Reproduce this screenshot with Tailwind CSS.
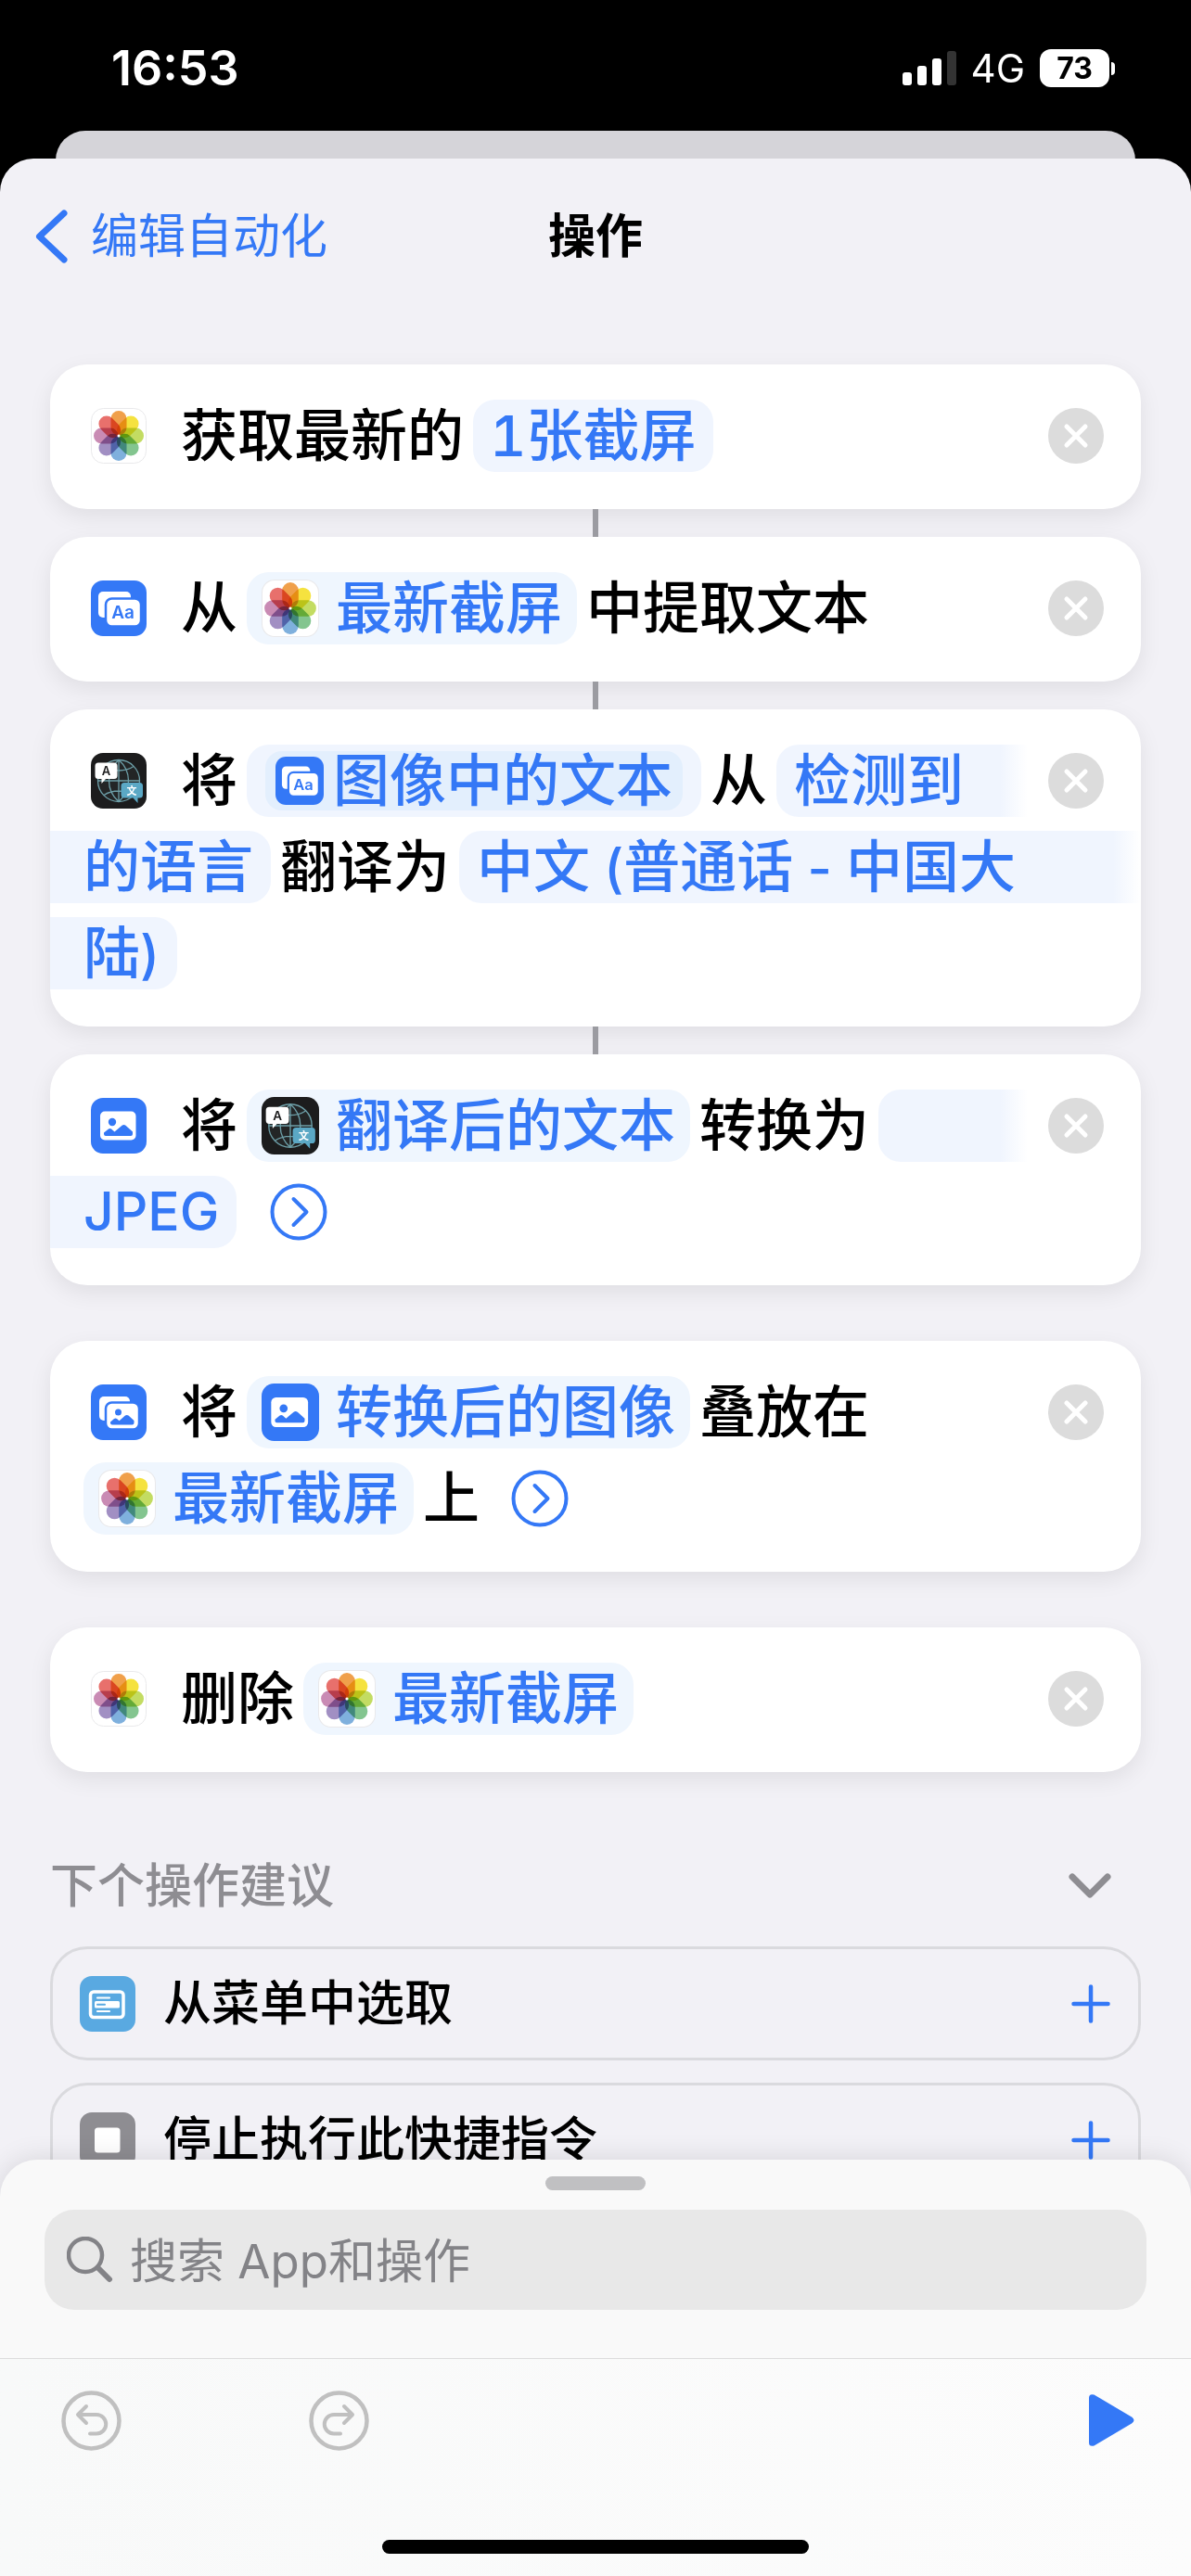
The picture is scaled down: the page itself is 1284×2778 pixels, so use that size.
<!DOCTYPE html>
<html lang="zh-CN">

<head>
    <meta charset="UTF-8">
    <meta name="viewport" content="width=device-width, initial-scale=1.0">
    <title>操作</title>
    <script src="https://cdn.jsdelivr.net/npm/@tailwindcss/browser@4"></script>
</head>

<body class="h-screen flex flex-col overflow-hidden bg-black font-['Inter','Noto_Sans_CJK_SC',sans-serif] text-black">

    <!-- icon sprite -->
    <svg class="hidden">
        <symbol id="photos" viewBox="0 0 60 60">
            <rect x="0.5" y="0.5" width="59" height="59" rx="13" fill="#fff" stroke="#e9e9eb" />
            <g class="isolate">
                <rect class="mix-blend-multiply" x="21.5" y="3" width="17" height="26.5" rx="8.5" fill="#f0a04b" />
                <rect class="mix-blend-multiply" x="21.5" y="3" width="17" height="26.5" rx="8.5" fill="#f5e23f" transform="rotate(45 30 30)" />
                <rect class="mix-blend-multiply" x="21.5" y="3" width="17" height="26.5" rx="8.5" fill="#c3dc62" transform="rotate(90 30 30)" />
                <rect class="mix-blend-multiply" x="21.5" y="3" width="17" height="26.5" rx="8.5" fill="#83c58f" transform="rotate(135 30 30)" />
                <rect class="mix-blend-multiply" x="21.5" y="3" width="17" height="26.5" rx="8.5" fill="#7fb0dd" transform="rotate(180 30 30)" />
                <rect class="mix-blend-multiply" x="21.5" y="3" width="17" height="26.5" rx="8.5" fill="#a18fc3" transform="rotate(225 30 30)" />
                <rect class="mix-blend-multiply" x="21.5" y="3" width="17" height="26.5" rx="8.5" fill="#c98bb4" transform="rotate(270 30 30)" />
                <rect class="mix-blend-multiply" x="21.5" y="3" width="17" height="26.5" rx="8.5" fill="#e8706c" transform="rotate(315 30 30)" />
            </g>
            <circle cx="30" cy="30" r="1.5" fill="#fff" />
        </symbol>
        <symbol id="extract" viewBox="0 0 60 60">
            <rect width="60" height="60" rx="13" fill="#3478f6" />
            <rect x="8" y="12" width="35" height="28" rx="5" fill="#fff" />
            <rect x="16" y="19.5" width="38" height="30" rx="6.5" fill="#fff" stroke="#3478f6" stroke-width="2.5" />
            <text x="34.5" y="41" text-anchor="middle" font-size="19" font-weight="600" fill="#3478f6" font-family="Inter">Aa</text>
        </symbol>
        <symbol id="translate" viewBox="0 0 60 60">
            <rect width="60" height="60" rx="13" fill="#1c1c1d" />
            <g fill="none" stroke="#6d9fa8" stroke-width="1.3">
                <circle cx="30" cy="30" r="22.5" fill="#232526" />
                <path d="M30 7.5v45M7.5 30h45M30 7.5c-14 12-14 33 0 45M30 7.5c14 12 14 33 0 45M14 14.5c9 6 23 6 32 0M14 45.5c9-6 23-6 32 0" />
            </g>
            <path d="M8 10.5h17a3.5 3.5 0 0 1 3.5 3.5v10.5a3.5 3.5 0 0 1-3.5 3.5h-9l-4.5 5v-5H8a3.5 3.5 0 0 1-3.5-3.5V14a3.5 3.5 0 0 1 3.5-3.5z" fill="#fff" />
            <text x="16.5" y="24" text-anchor="middle" font-size="13" font-weight="600" fill="#1c1c1d" font-family="Inter">A</text>
            <path d="M36 32h16.5a3.5 3.5 0 0 1 3.5 3.5V45a3.5 3.5 0 0 1-3.5 3.5h-2V54l-5-5.5H36a3.5 3.5 0 0 1-3.5-3.5v-9.5A3.5 3.5 0 0 1 36 32z" fill="#5ba8c5" />
            <text x="44" y="44.5" text-anchor="middle" font-size="11" font-weight="700" fill="#fff" font-family="Noto Sans CJK SC">文</text>
        </symbol>
        <symbol id="image" viewBox="0 0 60 60">
            <rect width="60" height="60" rx="13" fill="#3478f6" />
            <rect x="10" y="14.5" width="38.5" height="31" rx="5" fill="#fff" />
            <circle cx="23" cy="26" r="4.2" fill="#3478f6" />
            <path d="M14 39v-1.5l5-4q1.5-1 3 0l3.5 3 8-6.8q2-1.4 4 0l7.5 6.8V39q0 2-2 2H16q-2 0-2-2z" fill="#3478f6" />
        </symbol>
        <symbol id="overlay" viewBox="0 0 60 60">
            <rect width="60" height="60" rx="13" fill="#3478f6" />
            <rect x="9" y="13" width="33" height="26" rx="5" fill="#fff" />
            <rect x="16" y="19.5" width="36" height="29" rx="6.5" fill="#fff" stroke="#3478f6" stroke-width="2.5" />
            <circle cx="29.5" cy="30" r="3.5" fill="#3478f6" />
            <path d="M21 41.5V40.5l4-3.5q1.5-1 3 0l2.5 2.2 6.5-5.6q1.8-1.2 3.5 0l6 5.4v2.5q0 2-2 2H23q-2 0-2-2z" fill="#3478f6" />
        </symbol>
        <symbol id="menu" viewBox="0 0 60 60">
            <rect width="60" height="60" rx="13" fill="#59a9e1" />
            <rect x="11.5" y="17" width="35.5" height="27.5" rx="3.5" fill="none" stroke="#fff" stroke-width="3.5" />
            <path d="M19 23.5h13M19 38h13" stroke="#fff" stroke-width="2.2" stroke-linecap="round" />
            <rect x="16" y="27" width="27" height="7.5" rx="1.5" fill="#fff" />
            <path d="M19 30.8h8" stroke="#59a9e1" stroke-width="2" stroke-linecap="round" />
        </symbol>
        <symbol id="stop" viewBox="0 0 60 60">
            <rect width="60" height="60" rx="13" fill="#8e8d92" />
            <rect x="16" y="16.5" width="27.5" height="27" rx="3.5" fill="#fff" />
        </symbol>
        <symbol id="close" viewBox="0 0 60 60">
            <circle cx="30" cy="30" r="30" fill="#dcdcdc" />
            <path d="M20 20l20 20M40 20L20 40" stroke="#fff" stroke-width="5" stroke-linecap="round" />
        </symbol>
        <symbol id="more" viewBox="0 0 62 62">
            <circle cx="31" cy="31" r="28.5" fill="none" stroke="#3478f6" stroke-width="4" />
            <path d="M25.5 17l14 14-14 14" fill="none" stroke="#3478f6" stroke-width="4" stroke-linecap="round" stroke-linejoin="round" />
        </symbol>
        <symbol id="plus" viewBox="0 0 42 42">
            <path d="M21 2.5v37M2.5 21h37" stroke="#3478f6" stroke-width="4.5" stroke-linecap="round" />
        </symbol>
    </svg>

    <!-- status bar -->
    <header class="h-[141px] shrink-0 flex items-center justify-between pl-[120px] pr-[82px] pt-1.5 text-white">
        <time class="text-[52px] font-semibold">16:53</time>
        <div class="flex items-center gap-4">
            <svg class="w-[58px] h-[37px]" viewBox="0 0 58 37" fill="#fff">
                <rect x="0" y="23" width="10" height="14" rx="3" />
                <rect x="16" y="16" width="10" height="21" rx="3" />
                <rect x="32" y="8" width="10" height="29" rx="3" />
                <rect x="48" y="0" width="10" height="37" rx="3" fill="#333" />
            </svg>
            <span class="text-[42px]">4G</span>
            <div class="flex items-center gap-0.5">
                <span class="w-[75px] h-[41px] rounded-xl bg-white flex items-center justify-center text-black text-[32px] font-bold">73</span>
                <span class="w-1 h-[14px] rounded-r-full bg-white"></span>
            </div>
        </div>
    </header>

    <div class="h-[70px] -mb-10 shrink-0 mx-[60px] rounded-t-[32px] bg-[#d5d4d9]"></div>

    <div class="relative flex-1 min-h-0 flex flex-col rounded-t-[36px] bg-[#f2f1f6] overflow-hidden">
        <nav class="h-[168px] shrink-0 grid grid-cols-3 items-center px-[38px] text-[51px]">
            <a href="#" class="flex items-center gap-6 text-[#3478f6] whitespace-nowrap">
                <svg class="w-9 h-[58px]" viewBox="0 0 36 58" fill="none" stroke="currentColor" stroke-width="7" stroke-linecap="round" stroke-linejoin="round">
                    <path d="M31 4L4.5 29 31 54" />
                </svg>
                编辑自动化
            </a>
            <h1 class="text-center font-bold">操作</h1>
        </nav>

        <main class="flex-1 min-h-0 overflow-y-auto [scrollbar-width:none] px-[54px] pt-[54px] font-medium">
            <div class="flex flex-col text-[61px] leading-[78px] whitespace-nowrap">

                <section class="rounded-[40px] bg-white pt-[30px] pb-[33px] shadow-[0_8px_24px_rgba(0,0,0,0.08)]">
                    <div class="h-[93px] pl-11 pr-10 flex items-center gap-2.5">
                        <svg class="size-[60px] mr-[27px]"><use href="#photos" /></svg>
                        <span>获取最新的</span>
                        <button class="h-[78px] px-[18px] rounded-3xl bg-[#f0f5fe] text-[#3478f6] tabular-nums">1张截屏</button>
                        <button class="ml-auto" aria-label="移除"><svg class="size-[60px]"><use href="#close" /></svg></button>
                    </div>
                </section>
                <div class="relative mx-auto w-1.5 h-[30px] bg-[#9b9ba1]"></div>

                <section class="rounded-[40px] bg-white pt-[30px] pb-[33px] shadow-[0_8px_24px_rgba(0,0,0,0.08)]">
                    <div class="h-[93px] pl-11 pr-10 flex items-center gap-2.5">
                        <svg class="size-[60px] mr-[27px]"><use href="#extract" /></svg>
                        <span>从</span>
                        <button class="h-[78px] px-4 rounded-3xl bg-[#eff6fe] text-[#3478f6] flex items-center gap-[18px]">
                            <svg class="size-[62px]"><use href="#photos" /></svg>最新截屏
                        </button>
                        <span>中提取文本</span>
                        <button class="ml-auto" aria-label="移除"><svg class="size-[60px]"><use href="#close" /></svg></button>
                    </div>
                </section>
                <div class="relative mx-auto w-1.5 h-[30px] bg-[#9b9ba1]"></div>

                <section class="rounded-[40px] bg-white pt-[30px] pb-[33px] shadow-[0_8px_24px_rgba(0,0,0,0.08)]">
                    <div class="h-[93px] pl-11 pr-10 flex items-center gap-2.5">
                        <svg class="size-[60px] mr-[27px]"><use href="#translate" /></svg>
                        <span>将</span>
                        <button class="h-[78px] px-5 rounded-3xl bg-[#f0f5fe] text-[#3478f6] flex items-center">
                            <span class="h-16 px-[11px] rounded-[18px] bg-[#e3effd] flex items-center gap-2.5">
                                <svg class="size-[52px]"><use href="#extract" /></svg>图像中的文本
                            </span>
                        </button>
                        <span>从</span>
                        <button class="flex-1 h-[78px] pl-[19px] mr-3 rounded-l-3xl bg-[linear-gradient(to_right,#f0f5fe_calc(100%-30px),#fff)] text-[#3478f6] text-left">检测到</button>
                        <button class="ml-auto" aria-label="移除"><svg class="size-[60px]"><use href="#close" /></svg></button>
                    </div>
                    <div class="h-[93px] flex items-center gap-2.5">
                        <button class="h-[78px] pl-9 pr-[19px] rounded-r-3xl bg-[#f0f5fe] text-[#3478f6]">的语言</button>
                        <span>翻译为</span>
                        <button class="flex-1 h-[78px] pl-[19px] rounded-l-3xl bg-[linear-gradient(to_right,#f0f5fe_calc(100%-30px),#fff)] text-[#3478f6] text-left">中文<span class="text-[57px]"> (</span>普通话<span class="text-[57px]"> - </span>中国大</button>
                    </div>
                    <div class="h-[93px] flex items-center">
                        <button class="h-[78px] pl-9 pr-[19px] rounded-r-3xl bg-[#f0f5fe] text-[#3478f6]">陆<span class="text-[57px]">)</span></button>
                    </div>
                </section>
                <div class="relative mx-auto w-1.5 h-[30px] bg-[#9b9ba1]"></div>

                <section class="rounded-[40px] bg-white pt-[30px] pb-[33px] shadow-[0_8px_24px_rgba(0,0,0,0.08)]">
                    <div class="h-[93px] pl-11 pr-10 flex items-center gap-2.5">
                        <svg class="size-[60px] mr-[27px]"><use href="#image" /></svg>
                        <span>将</span>
                        <button class="h-[78px] px-4 rounded-3xl bg-[#eff6fe] text-[#3478f6] flex items-center gap-[18px]">
                            <svg class="size-[62px]"><use href="#translate" /></svg>翻译后的文本
                        </button>
                        <span>转换为</span>
                        <span class="flex-1 h-[78px] mr-3 rounded-l-3xl bg-[linear-gradient(to_right,#f0f5fe_calc(100%-30px),#fff)]"></span>
                        <button class="ml-auto" aria-label="移除"><svg class="size-[60px]"><use href="#close" /></svg></button>
                    </div>
                    <div class="h-[93px] flex items-center gap-9">
                        <button class="h-[78px] pl-9 pr-[19px] rounded-r-3xl bg-[#f0f5fe] text-[#3478f6] text-[57px]">JPEG</button>
                        <button aria-label="更多选项"><svg class="size-[62px]"><use href="#more" /></svg></button>
                    </div>
                </section>

                <section class="mt-[60px] rounded-[40px] bg-white pt-[30px] pb-[33px] shadow-[0_8px_24px_rgba(0,0,0,0.08)]">
                    <div class="h-[93px] pl-11 pr-10 flex items-center gap-2.5">
                        <svg class="size-[60px] mr-[27px]"><use href="#overlay" /></svg>
                        <span>将</span>
                        <button class="h-[78px] px-4 rounded-3xl bg-[#eff6fe] text-[#3478f6] flex items-center gap-[18px]">
                            <svg class="size-[62px]"><use href="#image" /></svg>转换后的图像
                        </button>
                        <span>叠放在</span>
                        <button class="ml-auto" aria-label="移除"><svg class="size-[60px]"><use href="#close" /></svg></button>
                    </div>
                    <div class="h-[93px] pl-9 flex items-center gap-2.5">
                        <button class="h-[78px] px-4 rounded-3xl bg-[#eff6fe] text-[#3478f6] flex items-center gap-[18px]">
                            <svg class="size-[62px]"><use href="#photos" /></svg>最新截屏
                        </button>
                        <span>上</span>
                        <button class="ml-6" aria-label="更多选项"><svg class="size-[62px]"><use href="#more" /></svg></button>
                    </div>
                </section>

                <section class="mt-[60px] rounded-[40px] bg-white pt-[30px] pb-[33px] shadow-[0_8px_24px_rgba(0,0,0,0.08)]">
                    <div class="h-[93px] pl-11 pr-10 flex items-center gap-2.5">
                        <svg class="size-[60px] mr-[27px]"><use href="#photos" /></svg>
                        <span>删除</span>
                        <button class="h-[78px] px-4 rounded-3xl bg-[#eff6fe] text-[#3478f6] flex items-center gap-[18px]">
                            <svg class="size-[62px]"><use href="#photos" /></svg>最新截屏
                        </button>
                        <button class="ml-auto" aria-label="移除"><svg class="size-[60px]"><use href="#close" /></svg></button>
                    </div>
                </section>
            </div>

            <!-- suggestions -->
            <div class="mt-[84px] flex items-center justify-between pr-8 text-[51px] leading-[78px] text-[#8e8d92]">
                <h2>下个操作建议</h2>
                <button aria-label="收起">
                    <svg class="w-[46px] h-7" viewBox="0 0 46 28" fill="none" stroke="currentColor" stroke-width="7" stroke-linecap="round" stroke-linejoin="round">
                        <path d="M4 4l19 19L42 4" />
                    </svg>
                </button>
            </div>
            <ul class="mt-[26px] flex flex-col gap-6 text-[52px] leading-[78px]">
                <li class="h-[123px] shrink-0 rounded-[40px] border-[3px] border-[#dadade] pl-[29px] pr-[30px] flex items-center">
                    <svg class="size-[60px] mr-[30px]"><use href="#menu" /></svg>
                    <span>从菜单中选取</span>
                    <button class="ml-auto" aria-label="添加"><svg class="size-[42px]"><use href="#plus" /></svg></button>
                </li>
                <li class="h-[123px] shrink-0 rounded-[40px] border-[3px] border-[#dadade] pl-[29px] pr-[30px] flex items-center">
                    <svg class="size-[60px] mr-[30px]"><use href="#stop" /></svg>
                    <span>停止执行此快捷指令</span>
                    <button class="ml-auto" aria-label="添加"><svg class="size-[42px]"><use href="#plus" /></svg></button>
                </li>
            </ul>
        </main>

        <!-- search sheet + toolbar -->
        <footer class="relative shrink-0 rounded-t-[40px] bg-[#f9f9f9] shadow-[0_0_30px_rgba(0,0,0,0.12)]">
            <div class="px-12 pt-[18px] pb-[52px]">
                <div class="mx-auto w-[108px] h-[15px] rounded-full bg-[#c0c0c2]"></div>
                <label class="mt-[21px] h-[108px] rounded-[32px] bg-[#e8e8e8] pl-6 pr-6 flex items-center gap-[18px] text-[#838387]">
                    <svg class="size-[50px] shrink-0" viewBox="0 0 50 50" fill="none" stroke="currentColor" stroke-linecap="round">
                        <circle cx="20" cy="20" r="18" stroke-width="4.5" />
                        <path d="M33.5 33.5L46 46" stroke-width="6" />
                    </svg>
                    <input type="search" aria-label="搜索" placeholder="搜索 App和操作" class="flex-1 pt-1 bg-transparent outline-none text-[51px] leading-[78px] placeholder:text-[#838387]">
                </label>
            </div>
            <div class="border-t border-[#dcdcdc] bg-linear-to-r from-[#f8f9f9] to-[#fcfcfc] pb-6">
                <div class="h-[195px] pt-[34px] pl-[66px] pr-[60px] flex items-start text-[#c0c0c0]">
                    <button aria-label="撤销">
                        <svg class="size-[65px]" viewBox="0 0 65 65" fill="none" stroke="currentColor" stroke-width="4" stroke-linecap="round" stroke-linejoin="round">
                            <circle cx="32.5" cy="32.5" r="30" stroke-width="4.5" />
                            <path d="M27 17l-9 9 9 9M19 26h19a10 10 0 0 1 0 20.5h-7" />
                        </svg>
                    </button>
                    <button class="ml-[202px]" aria-label="重做">
                        <svg class="size-[65px]" viewBox="0 0 65 65" fill="none" stroke="currentColor" stroke-width="4" stroke-linecap="round" stroke-linejoin="round">
                            <circle cx="32.5" cy="32.5" r="30" stroke-width="4.5" />
                            <path d="M38 17l9 9-9 9M46 26H27a10 10 0 0 0 0 20.5h7" />
                        </svg>
                    </button>
                    <button class="ml-auto mt-1" aria-label="运行">
                        <svg class="w-[50px] h-14" viewBox="0 0 50 56" fill="#3478f6">
                            <path d="M0 4q0-5 5.5-3.5L46 24.5q5 3.5 0 7L5.5 55.5Q0 57 0 52z" />
                        </svg>
                    </button>
                </div>
                <div class="mx-auto w-[460px] h-[15px] rounded-full bg-black"></div>
            </div>
        </footer>
    </div>
</body>

</html>
